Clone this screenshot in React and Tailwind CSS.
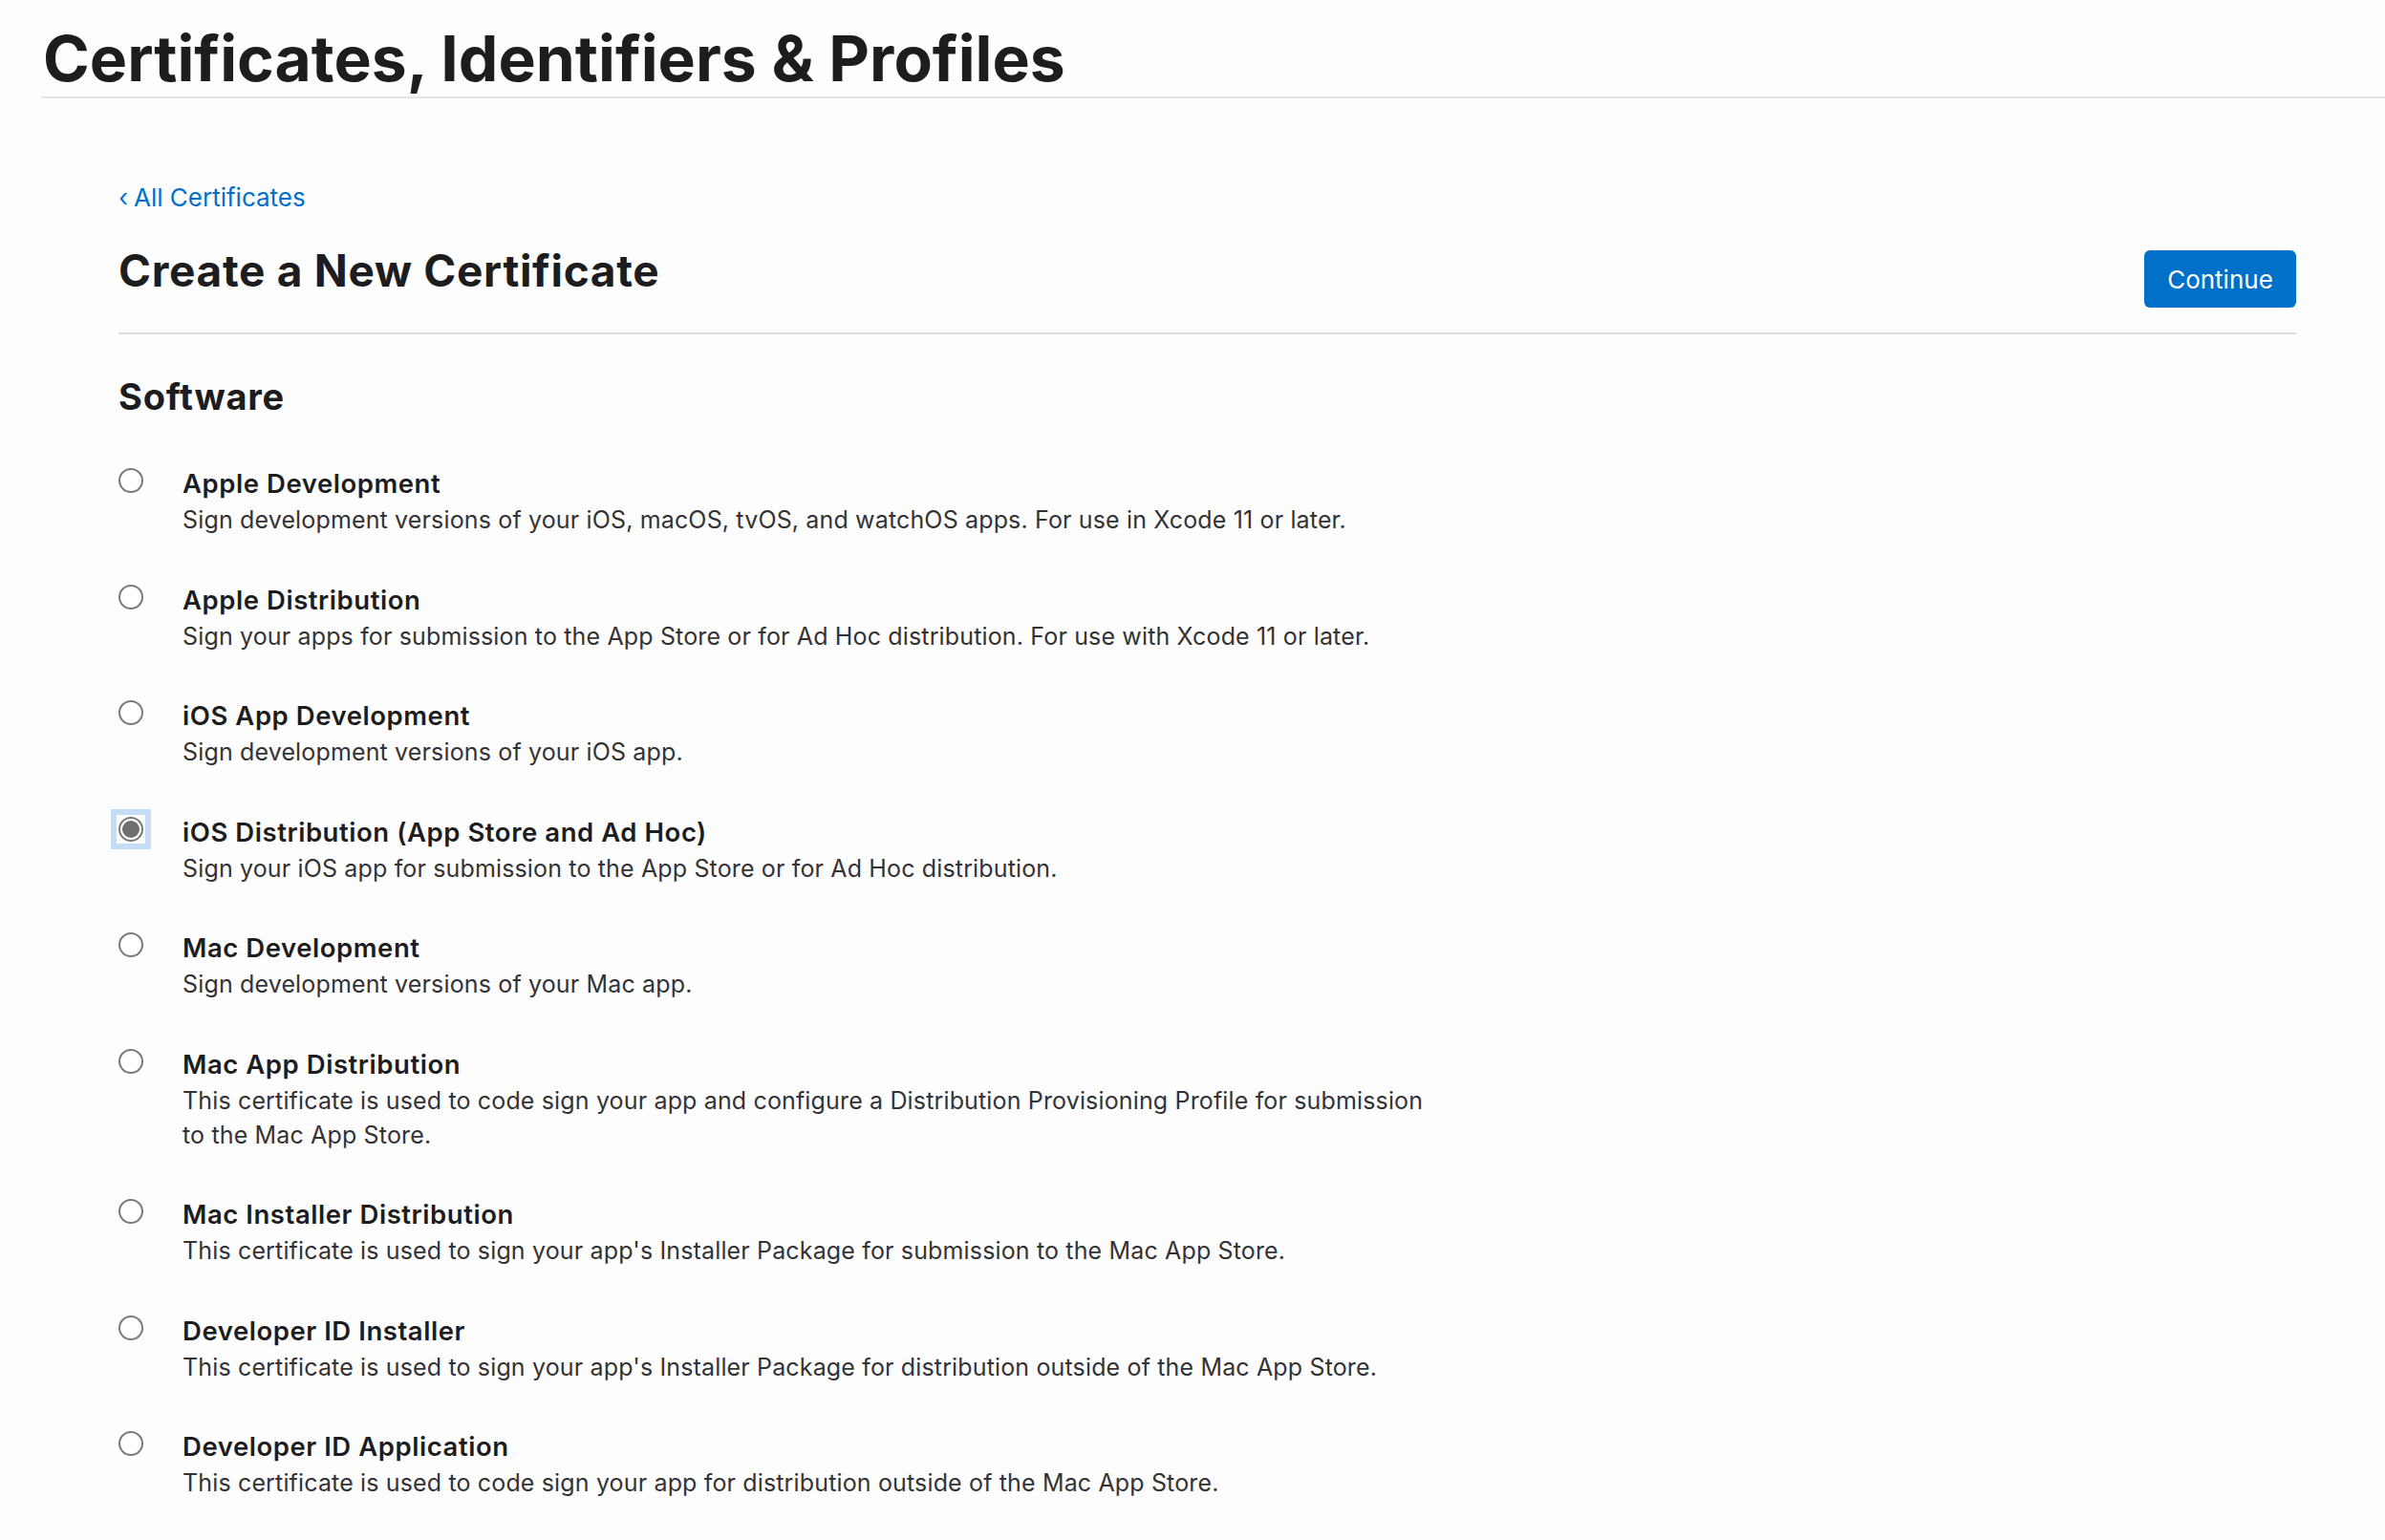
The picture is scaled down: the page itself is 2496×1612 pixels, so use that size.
import { useState } from 'react';

const certificateTypes = [
  {
    id: 'apple-dev',
    title: 'Apple Development',
    description:
      'Sign development versions of your iOS, macOS, tvOS, and watchOS apps. For use in Xcode 11 or later.',
  },
  {
    id: 'apple-dist',
    title: 'Apple Distribution',
    description:
      'Sign your apps for submission to the App Store or for Ad Hoc distribution. For use with Xcode 11 or later.',
  },
  {
    id: 'ios-dev',
    title: 'iOS App Development',
    description: 'Sign development versions of your iOS app.',
  },
  {
    id: 'ios-dist',
    title: 'iOS Distribution (App Store and Ad Hoc)',
    description: 'Sign your iOS app for submission to the App Store or for Ad Hoc distribution.',
  },
  {
    id: 'mac-dev',
    title: 'Mac Development',
    description: 'Sign development versions of your Mac app.',
  },
  {
    id: 'mac-app-dist',
    title: 'Mac App Distribution',
    description:
      'This certificate is used to code sign your app and configure a Distribution Provisioning Profile for submission to the Mac App Store.',
  },
  {
    id: 'mac-installer',
    title: 'Mac Installer Distribution',
    description:
      "This certificate is used to sign your app's Installer Package for submission to the Mac App Store.",
  },
  {
    id: 'devid-installer',
    title: 'Developer ID Installer',
    description:
      "This certificate is used to sign your app's Installer Package for distribution outside of the Mac App Store.",
  },
  {
    id: 'devid-app',
    title: 'Developer ID Application',
    description:
      'This certificate is used to code sign your app for distribution outside of the Mac App Store.',
  },
];

function Radio({ checked }) {
  return (
    <span
      className={`mt-[4px] flex h-[26px] w-[26px] shrink-0 items-center justify-center ${
        checked ? 'outline-[6px] outline-solid outline-[#c4dcf6] outline-offset-[2px]' : ''
      }`}
    >
      <span className="flex h-[26px] w-[26px] items-center justify-center rounded-full border-2 border-[#7a7a7a] bg-white">
        {checked && <span className="h-[18px] w-[18px] rounded-full bg-[#6f6f6f]" />}
      </span>
    </span>
  );
}

export default function App() {
  const [selected, setSelected] = useState('ios-dist');

  return (
    <div className="min-h-screen bg-[#fdfdfd] font-['Inter','Liberation_Sans',sans-serif] text-[#1d1d1f] antialiased">
      {/* page header */}
      <header className="ml-[43px] border-b-2 border-[#e4e4e4] pt-[28px] pb-[7px]">
        <h1 className="pl-[2px] text-[66px] leading-[66px] font-bold">
          Certificates, Identifiers &amp; Profiles
        </h1>
      </header>

      <main className="pl-[124px] pr-[93px] pb-16">
        <a href="#" className="mt-[88px] flex items-center gap-[6px] text-[26px] leading-[32px] text-[#0070c9]">
          <span className="text-[26px]">‹</span>
          <span>All Certificates</span>
        </a>

        <div className="mt-[33px] flex items-start justify-between border-b-2 border-[#dedede] pb-[26px]">
          <h2 className="text-[46px] leading-[54px] font-bold tracking-[0.015em]">Create a New Certificate</h2>
          <button
            type="button"
            className="mt-[6px] h-[60px] w-[159px] rounded-[6px] bg-[#0070c9] text-[26px] text-white"
          >
            Continue
          </button>
        </div>

        <h3 className="mt-[43px] text-[38px] leading-[44px] font-bold tracking-[0.02em]">Software</h3>

        <ul className="mt-[49px] flex flex-col gap-[45.5px]">
          {certificateTypes.map((cert) => (
            <li
              key={cert.id}
              className="flex cursor-pointer gap-[41px]"
              onClick={() => setSelected(cert.id)}
            >
              <Radio checked={selected === cert.id} />
              <div>
                <div className="text-[27.5px] leading-[40px] font-semibold tracking-[0.02em]">{cert.title}</div>
                <p className="max-w-[1310px] text-[25px] leading-[36px] tracking-[0.006em] text-[#333336]">
                  {cert.description}
                </p>
              </div>
            </li>
          ))}
        </ul>
      </main>
    </div>
  );
}
